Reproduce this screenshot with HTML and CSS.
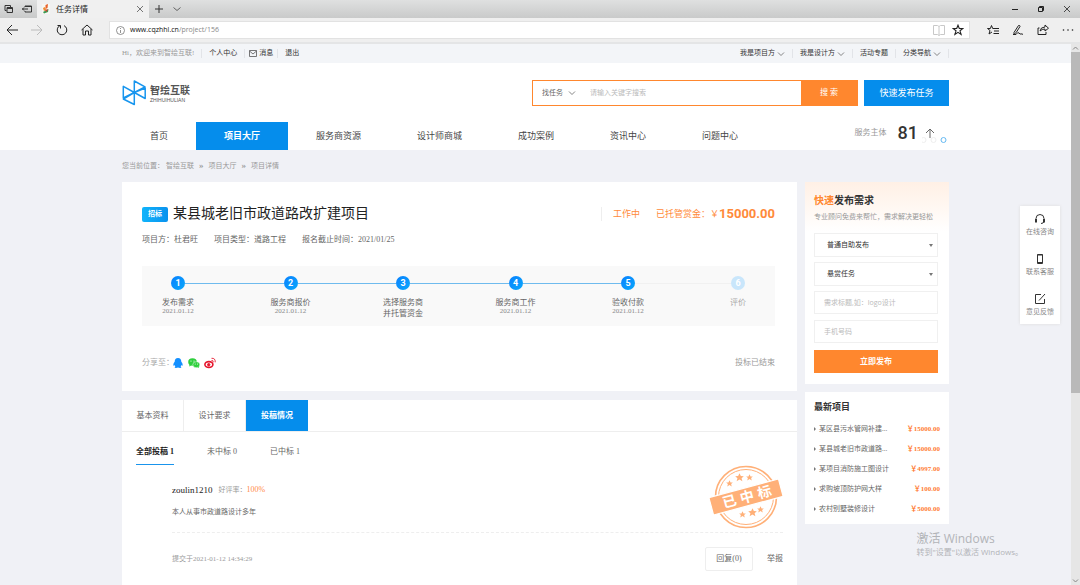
FILE: index.html
```html
<!DOCTYPE html>
<html lang="zh-CN">
<head>
<meta charset="utf-8">
<meta name="viewport" content="width=device-width, initial-scale=1">
<title>任务详情</title>
<link rel="stylesheet" href="styles.css">
</head>
<body>
<svg class="defs" width="0" height="0" aria-hidden="true">
  <symbol id="chev" viewBox="0 0 8 8"><path d="M1 2.5 4 5.5 7 2.5" fill="none" stroke="#777" stroke-width=".9"/></symbol>
  <symbol id="star" viewBox="-5 -5 10 10"><path d="M0-4.800 1.500-1.600 4.800-1.500 2.300.7 3.200 4.300 0 2.300-3.200 4.300-2.300.7-4.800-1.500-1.500-1.600Z" fill="currentColor"/></symbol>
</svg>

<div class="tabstrip">
  <div class="strip-tools">
    <svg width="10" height="10" viewBox="0 0 10 10" fill="none" stroke="#333"><path d="M2.5 6.5H1v-5h5.500v1.500M3 3.500h5.500v5H3zM3 4.500h5.500"/></svg>
    <svg width="10" height="10" viewBox="0 0 10 10" fill="none" stroke="#333"><path d="M3 3V2h6.500v6H3V7M0 5h6M2 3.500.500 5 2 6.500M3 2.500h6"/></svg>
  </div>
  <div class="browser-tab">
    <svg width="8" height="10" viewBox="0 0 8 10"><rect width="8" height="10" fill="#f7f7f2"/><path d="M3.500 1 6 0 5.500 4 3.500 5Z" fill="#e9632c"/><path d="M1 4 3 3 4 6 2 7Z" fill="#f08a30"/><path d="M1 8 6.500 5 6 8 2 9.500Z" fill="#3c9a55"/><path d="M3 6 6 5 4.500 8Z" fill="#d33b2e"/></svg>
    <span class="browser-tab-title">任务详情</span>
    <svg width="8" height="8" viewBox="0 0 8 8" stroke="#555" stroke-width=".8"><path d="m1 1 6 6M7 1 1 7"/></svg>
  </div>
  <div class="strip-new">
    <svg width="8" height="8" viewBox="0 0 8 8" stroke="#333"><path d="M0 4h8M4 0v8"/></svg>
    <svg width="8" height="8" viewBox="0 0 8 8" fill="none" stroke="#444" stroke-width=".8"><path d="m.5 2.500 3.500 3 3.500-3"/></svg>
  </div>
  <div class="window-tools">
    <svg width="6" height="6" viewBox="0 0 6 6" stroke="#222"><path d="M0 3.500h6"/></svg>
    <svg width="6" height="6" viewBox="0 0 6 6" fill="none" stroke="#222"><path d="M.5 1.500h4v4h-4zM1.500 1.500v-1h4v4h-1"/></svg>
    <svg width="6" height="6" viewBox="0 0 6 6" stroke="#222" stroke-width=".8"><path d="m0 0 6 6M6 0 0 6"/></svg>
  </div>
</div>
<div class="toolbar">
  <div class="toolbar-nav">
    <svg width="12" height="12" viewBox="0 0 12 12" fill="none" stroke="#222"><path d="M12 6H1M6 1 1 6l5 5"/></svg>
    <svg width="12" height="12" viewBox="0 0 12 12" fill="none" stroke="#bbb"><path d="M0 6h11M6 1l5 5-5 5"/></svg>
    <svg width="12" height="12" viewBox="0 0 12 12" fill="none" stroke="#222"><path d="M8 1.600A4.800 4.800 0 1 1 4 1.600M1.500 1.500H4.500V4.500"/></svg>
    <svg width="12" height="12" viewBox="0 0 12 12" fill="none" stroke="#222"><path d="M.5 6 6 1l5.500 5M2 5v6h2.500V7h3v4H10V5"/></svg>
  </div>
  <div class="address">
    <svg width="9" height="9" viewBox="0 0 9 9" fill="none" stroke="#777" stroke-width=".8"><circle cx="4.500" cy="4.500" r="4"/><path d="M4.500 4v3M4.500 2v1"/></svg>
    <span class="address-url"><b>www.cqzhhl.cn</b>/project/156</span>
    <svg width="12" height="11" viewBox="0 0 12 11" fill="none" stroke="#c8c8c8"><path d="M.5.500h4l1.500 1 1.500-1h4v9h-4l-1.500 1-1.500-1h-4zM6 1.500v9"/></svg>
    <svg width="12" height="12" viewBox="0 0 12 12" fill="none" stroke="#222" stroke-width="1.100"><path d="m6 1.200 1.300 3.300h3.600L8 6.800l1.100 3.700L6 8.300l-3.100 2.200L4 6.800 1.100 4.500h3.600z"/></svg>
  </div>
  <div class="toolbar-actions">
    <svg width="12" height="12" viewBox="0 0 12 12" fill="none" stroke="#222"><path d="M7 4.500H5.700L4.500 1.500 3.400 4.500H.5L3 6.500 2 10l3-2M7 4.500h5M7 7h5M6.500 9.500H12"/></svg>
    <svg width="12" height="12" viewBox="0 0 12 12" fill="none" stroke="#222"><path d="M2 8.500 6.500 1.500q1.500-.5 1.500 1L4.500 8 2 10.500ZM1 10.500h3q2-3 3-1.500t2 1 2 .5"/></svg>
    <svg width="12" height="12" viewBox="0 0 12 12" fill="none" stroke="#222"><path d="M2.500 4H1v6.500h8V8M3 7q.5-4 5-4V1l3.500 3.200L8 7V5Q5 5 3 7Z"/></svg>
    <svg width="12" height="12" viewBox="0 0 12 12" fill="#222"><circle cx="1.500" cy="6" r=".8"/><circle cx="6" cy="6" r=".8"/><circle cx="10.500" cy="6" r=".8"/></svg>
  </div>
</div>

<div class="viewport">
<div class="page">
  <div class="topbar">
    <div class="container topbar-row">
      <ul class="toplinks toplinks-left">
        <li class="muted">Hi，欢迎来到智绘互联!</li>
        <li><a href="#">个人中心</a></li>
        <li class="tight"><a href="#"><svg width="8" height="7" viewBox="0 0 8 7" fill="none" stroke="#555" stroke-width=".8"><path d="M.5.500h7v6h-7zM.5 1 4 4l3.500-3"/></svg>消息</a></li>
        <li><a href="#">退出</a></li>
      </ul>
      <ul class="toplinks toplinks-right">
        <li><a href="#">我是项目方<svg width="8" height="8"><use href="#chev"/></svg></a></li>
        <li><a href="#">我是设计方<svg width="8" height="8"><use href="#chev"/></svg></a></li>
        <li><a href="#">活动专题</a></li>
        <li><a href="#">分类导航<svg width="8" height="8"><use href="#chev"/></svg></a></li>
      </ul>
    </div>
  </div>

  <header class="header">
    <div class="container">
      <div class="brand-row">
        <a class="logo" href="#">
          <svg width="24" height="26" viewBox="0 0 24 26" fill="none" stroke="#1795ee" stroke-width="1.500" stroke-linejoin="round"><path d="M12.300 12.500V1L23 6.800ZM12.300 12.500 1.300 6.300V18ZM12.300 12.500 23.200 8V18.500ZM12.300 12.500V24.500L1.300 19Z"/></svg>
          <span class="logo-words"><b>智绘互联</b><small>ZHIHUIHULIAN</small></span>
        </a>
        <form class="search">
          <span class="search-kind"><select aria-label="搜索类型"><option>找任务</option></select><svg width="8" height="8"><use href="#chev"/></svg></span>
          <input type="text" aria-label="关键字" placeholder="请输入关键字搜索">
          <button type="button">搜 索</button>
        </form>
        <button class="publish" type="button">快速发布任务</button>
      </div>
      <div class="nav-row">
        <nav class="nav">
          <a href="#">首页</a><a class="active" href="#">项目大厅</a><a href="#">服务商资源</a><a href="#">设计师商城</a><a href="#">成功案例</a><a href="#">资讯中心</a><a href="#">问题中心</a>
        </nav>
        <div class="counter">
          <span>服务主体</span><strong>81</strong>
          <svg width="27" height="22" viewBox="0 0 27 22" fill="none"><path d="M8 16V7M4 11l4-4 4 4" stroke="#666"/><circle cx="1.500" cy="18" r="2.500" stroke="#eee"/><circle cx="11.500" cy="18" r="2.500" stroke="#eee"/><circle cx="21.500" cy="18" r="2.500" stroke="#65b9f2"/></svg>
        </div>
      </div>
    </div>
  </header>

  <div class="container">
    <div class="crumbs"><span>您当前位置：</span><a href="#">智绘互联</a><i>»</i><a href="#">项目大厅</a><i>»</i><a href="#">项目详情</a></div>
    <div class="columns">
      <main class="main">
        <section class="card project">
          <div class="title-row">
            <span class="badge">招标</span>
            <h1>某县城老旧市政道路改扩建项目</h1>
            <div class="bounty"><span>工作中</span><span class="bounty-sum">已托管赏金：￥<strong>15000.00</strong></span></div>
          </div>
          <div class="meta"><span>项目方：杜君旺</span><span>项目类型：道路工程</span><span>报名截止时间：2021/01/25</span></div>
          <ol class="steps">
            <li><b>1</b><p>发布需求</p><time>2021.01.12</time></li>
            <li><b>2</b><p>服务商报价</p><time>2021.01.12</time></li>
            <li><b>3</b><p>选择服务商<br>并托管资金</p></li>
            <li><b>4</b><p>服务商工作</p><time>2021.01.12</time></li>
            <li class="last-done"><b>5</b><p>验收付款</p><time>2021.01.12</time></li>
            <li class="pending"><b>6</b><p>评价</p></li>
          </ol>
          <div class="share">
            <span>分享至：</span>
            <a href="#" aria-label="QQ"><svg width="12" height="12" viewBox="0 0 12 12" fill="#1490ff"><path d="M6 1C3.700 1 2.700 2.700 2.700 4.700 1.600 6 1 7.600 1.500 8.800c.4.200.8-.4 1-.7.200.7.500 1.100.9 1.500-1.200.6-.9 1.400.5 1.400.9 0 1.700-.2 2.100-.5.400.3 1.200.5 2.100.5 1.400 0 1.700-.8.500-1.400.4-.4.700-.8.900-1.500.2.300.6.900 1 .7.500-1.200-.1-2.800-1.200-4.100C9.300 2.700 8.300 1 6 1Z"/></svg></a>
            <a href="#" aria-label="微信"><svg width="12" height="12" viewBox="0 0 12 12"><ellipse cx="4.500" cy="5" rx="4.300" ry="3.700" fill="#2fcf3d"/><path d="m1.500 7.500-.3 2 2-1z" fill="#2fcf3d"/><ellipse cx="8.300" cy="7.700" rx="3.500" ry="3" fill="#2fcf3d" stroke="#fff" stroke-width=".5"/><path d="m9.500 10 1.300 1v-2z" fill="#2fcf3d"/><g fill="#fff"><circle cx="3" cy="4" r=".6"/><circle cx="6" cy="4" r=".6"/><circle cx="7.200" cy="7" r=".5"/><circle cx="9.500" cy="7" r=".5"/></g></svg></a>
            <a href="#" aria-label="微博"><svg width="12" height="12" viewBox="0 0 12 12" fill="none" stroke="#e6162d"><ellipse cx="4.900" cy="7.500" rx="4" ry="2.900" stroke-width="1.600"/><circle cx="4.700" cy="7.700" r="1.200" fill="#e6162d"/><path d="M7.500 3.500q2-.4 1.700 1.800M7.500 1.300q4-.4 3.700 4" stroke-width=".9"/></svg></a>
            <span class="share-state">投标已结束</span>
          </div>
        </section>

        <section class="card bids">
          <div class="tabs"><button type="button">基本资料</button><button type="button">设计要求</button><button class="active" type="button">投稿情况</button></div>
          <div class="subtabs"><a class="active" href="#">全部投稿 1</a><a href="#">未中标 0</a><a href="#">已中标 1</a></div>
          <article class="bid">
            <div class="bid-body">
              <div class="bid-user"><b>zoulin1210</b><span>好评率：</span><em>100%</em></div>
              <p>本人从事市政道路设计多年</p>
              <svg class="stamp" width="74" height="66" viewBox="0 0 74 66" role="img" aria-label="已中标">
                <g fill="none" stroke="#ffb078"><circle cx="37" cy="33" r="30.500" stroke-width="1.600"/><circle cx="37" cy="33" r="27.500"/></g>
                <g color="#ffb078"><use href="#star" x="17" y="16" width="7" height="7"/><use href="#star" x="26" y="9" width="9" height="9"/><use href="#star" x="37" y="10" width="7" height="7"/><use href="#star" x="30" y="47" width="7" height="7"/><use href="#star" x="39" y="44" width="9" height="9"/><use href="#star" x="48" y="42" width="7" height="7"/></g>
                <g transform="rotate(-15 37 33)"><rect x="1" y="24" width="72" height="18" rx="1" fill="#ffb078" stroke="#fff" stroke-width="1.200"/><text y="38" fill="#fff"><tspan x="13">已</tspan><tspan x="31">中</tspan><tspan x="49">标</tspan></text></g>
              </svg>
            </div>
            <div class="bid-foot"><span>提交于2021-01-12 14:34:29</span><button class="reply" type="button">回复(0)</button><a href="#">举报</a></div>
          </article>
        </section>
      </main>

      <aside class="side">
        <form class="card quick">
          <h2><em>快速</em>发布需求</h2>
          <p>专业顾问免费来帮忙，需求解决更轻松</p>
          <span class="pick"><select aria-label="发布方式"><option>普通自助发布</option></select></span>
          <span class="pick"><select aria-label="任务类型"><option>悬赏任务</option></select></span>
          <input type="text" aria-label="需求标题" placeholder="需求标题,如：logo设计">
          <input type="tel" aria-label="手机号码" placeholder="手机号码">
          <button type="button">立即发布</button>
        </form>
        <section class="card latest">
          <h2>最新项目</h2>
          <ul>
            <li><a href="#">某区县污水管网补建...</a><b>￥15000.00</b></li>
            <li><a href="#">某县城老旧市政道路...</a><b>￥15000.00</b></li>
            <li><a href="#">某项目消防施工图设计</a><b>￥4997.00</b></li>
            <li><a href="#">求购坡顶防护网大样</a><b>￥100.00</b></li>
            <li><a href="#">农村别墅装修设计</a><b>￥5000.00</b></li>
          </ul>
        </section>
      </aside>
    </div>
  </div>

  <div class="dock">
    <a href="#"><svg width="12" height="12" viewBox="0 0 12 12" fill="none" stroke="#333"><path d="M2 8V5.500a4 4 0 0 1 8 0V8M10 8.500Q9.500 10.500 7 10.500"/><path d="M2 6v3.500M10 6v3.500" stroke-width="2"/></svg>在线咨询</a>
    <a href="#"><svg width="12" height="12" viewBox="0 0 12 12" fill="none" stroke="#333"><path d="M3.500 1.500h5v9h-5zM3.500 2h5M3.500 9.500h5"/></svg>联系客服</a>
    <a href="#"><svg width="12" height="12" viewBox="0 0 12 12" fill="none" stroke="#333"><path d="M7 1.500H1.500v9h9V6M5 7.500l6-6.500"/></svg>意见反馈</a>
  </div>
  <div class="watermark"><p>激活 Windows</p><span>转到"设置"以激活 Windows。</span></div>
</div>
<div class="scrollbar">
  <svg width="9" height="8" viewBox="0 0 9 8" fill="none" stroke="#888"><path d="m2 5.500 2.500-2.500L7 5.500"/></svg>
  <div class="scroll-thumb"></div>
  <svg width="9" height="9" viewBox="0 0 9 9" fill="none" stroke="#888"><path d="m2 3.500 2.500 2.500L7 3.500"/></svg>
</div>
</div>
</body>
</html>
```

FILE: styles.css
```css
* { box-sizing: border-box; }
body, h1, h2, p, ul, ol { margin: 0; padding: 0; }
ul, ol { list-style: none; }
a { color: inherit; text-decoration: none; }
em, i { font-style: normal; }
svg { flex: none; }
button, input, select { font: inherit; color: inherit; border: 0; border-radius: 0; background: none; padding: 0; margin: 0; outline: 0; }
select { appearance: none; }

body {
  height: 100vh;
  display: flex;
  flex-direction: column;
  overflow: hidden;
  font: 8px/12px "Liberation Serif", "Noto Sans CJK SC", serif;
  color: #666;
  background: #f0f1f6;
}
.defs { position: absolute; }

/* Browser frame */
.tabstrip {
  flex: none;
  height: 18px;
  display: flex;
  align-items: center;
  background: linear-gradient(#dfe0e0, #c9caca);
}
.strip-tools { width: 37px; display: flex; gap: 8px; padding-left: 4px; }
.browser-tab {
  width: 112px;
  height: 18px;
  display: flex;
  align-items: center;
  gap: 6px;
  padding: 0 5px;
  background: #f0f0f0;
  color: #222;
}
.browser-tab-title { flex: 1; font: 8px/12px "Noto Sans CJK SC", sans-serif; }
.strip-new { display: flex; gap: 10px; padding-left: 6px; }
.window-tools { margin-left: auto; display: flex; gap: 20px; padding-right: 10px; }
.toolbar {
  flex: none;
  height: 26px;
  display: flex;
  align-items: center;
  background: #efefef;
  border-bottom: 2px solid #e4e5e6;
}
.toolbar-nav { width: 109px; display: flex; gap: 13px; padding-left: 6px; }
.address {
  flex: 1;
  height: 18px;
  display: flex;
  align-items: center;
  gap: 7px;
  padding: 0 5px 0 6px;
  background: #fff;
  border: 1px solid #e2e2e2;
}
.address-url { flex: 1; margin-left: -2px; font: 7px/12px "Open Sans", sans-serif; color: #888; }
.address-url b { font-weight: 500; color: #111; }
.toolbar-actions { display: flex; gap: 13px; padding: 0 6px 0 17px; }

/* Page frame */
.viewport { flex: 1; min-height: 0; display: flex; }
.page { flex: 1; min-width: 0; position: relative; overflow: hidden; }
.scrollbar { width: 9px; display: flex; flex-direction: column; background: #e6e6e6; }
.scroll-thumb { height: 63%; margin-bottom: auto; background: #b9b9b9; }
.container { max-width: 827px; margin: 0 auto; }
.card { background: #fff; }

/* Top links */
.topbar { background: #f3f5f8; font-size: 7px; color: #333; }
.topbar-row { display: flex; justify-content: space-between; height: 19px; align-items: center; }
.toplinks { display: flex; }
.toplinks li { line-height: 9px; padding: 0 7px; }
.toplinks a { display: flex; align-items: center; gap: 2px; }
.toplinks-left li + li { border-left: 1px solid #e2e4e8; }
.toplinks-left li:first-child { padding-left: 0; }
.toplinks-left .tight { padding: 0 4px; }
.toplinks-right li { border-right: 1px solid #e2e4e8; }
.toplinks .muted { color: #999; }

/* Header */
.header { background: #fff; padding-top: 17px; }
.brand-row { display: flex; height: 26px; }
.logo { display: flex; align-items: center; gap: 4px; margin-right: auto; }
.logo-words { display: flex; flex-direction: column; color: #555; font-family: "Noto Sans CJK SC", sans-serif; }
.logo-words b { font-size: 10px; line-height: 14px; }
.logo-words small { font: 5px/6px "Liberation Sans", sans-serif; }
.search { width: 326px; display: flex; border: 1px solid #ff872e; margin-right: 6px; }
.search-kind { width: 53px; display: flex; align-items: center; gap: 4px; padding-left: 9px; font-size: 7px; }
.search-kind select { width: 22px; }
.search input { flex: 1; min-width: 0; padding-left: 4px; font-size: 7px; }
.search button { width: 56px; background: #ff872e; color: #fff; font-size: 8px; }
input::placeholder { color: #bbb; opacity: 1; }
.publish { width: 85px; background: #058dec; color: #fff; font-size: 9px; }
.nav-row { display: flex; justify-content: space-between; margin-top: 16px; }
.nav { display: flex; font-size: 9px; line-height: 28px; color: #444; }
.nav a { padding: 0 28px; }
.nav .active { background: #058dec; color: #fff; font-weight: bold; }
.counter { display: flex; align-items: center; color: #999; height: 22px; }
.counter strong { margin: 0 4px 0 11px; font: 500 18px/22px Roboto, sans-serif; color: #333; }

/* Breadcrumbs and columns */
.crumbs { display: flex; padding: 10px 0; font-size: 7px; line-height: 12px; color: #999; }
.crumbs span { margin-right: 2px; }
.crumbs i { padding: 0 5px; font-size: 9px; font-weight: bold; line-height: 10px; }
.columns { display: flex; gap: 8px; align-items: flex-start; }
.main { flex: 1; min-width: 0; }
.side { width: 144px; }

/* Project summary */
.project { padding: 23px 22px 22px 20px; }
.title-row { display: flex; align-items: center; gap: 5px; }
.badge {
  padding: 0 6px;
  border-radius: 2px;
  background: linear-gradient(90deg, #10b4fb, #0a92ee);
  color: #fff;
  font-size: 7px;
  font-weight: bold;
  line-height: 15px;
}
h1 { font-size: 14px; font-weight: 400; line-height: 18px; color: #222; }
.bounty { margin-left: auto; display: flex; align-items: center; gap: 16px; padding-left: 11px; border-left: 1px solid #eee; font-size: 9px; line-height: 14px; color: #ff8a3a; }
.bounty-sum { display: flex; align-items: center; }
.bounty strong { font: bold 13px/14px Roboto, sans-serif; }
.meta { display: flex; gap: 16px; padding-top: 11px; }
.steps { display: flex; margin-top: 20px; padding-top: 10px; height: 60px; background: #f9f9f9; }
.steps li { flex: 1; position: relative; }
.steps .last-done { flex: none; width: 110px; }
.steps .pending { flex: none; width: 73px; }
.steps li:not(.pending)::after { content: ""; position: absolute; left: 43px; right: -29px; top: 7px; height: 1px; background: #6fbbee; }
.steps .last-done::after { background: #f1f1f1 !important; }
.steps b {
  display: block;
  width: 14px;
  height: 14px;
  margin-left: 29px;
  border-radius: 50%;
  background: linear-gradient(135deg, #0a80ff, #08a8fb);
  color: #fff;
  font: bold 9px/14px Roboto, sans-serif;
  text-align: center;
}
.steps p { width: 72px; margin-top: 7px; line-height: 11px; text-align: center; }
.steps time { display: block; width: 72px; font-size: 7px; line-height: 7px; text-align: center; color: #888; }
.steps .pending b { background: #c9e6fb; }
.steps .pending p { color: #aaa; }
.share { display: flex; align-items: center; gap: 4px; margin-top: 31px; color: #aaa; }
.share span:first-child { margin-right: -6px; }
.share a { height: 12px; }
.share-state { margin-left: auto; color: #999; }

/* Bids */
.bids { margin-top: 9px; padding-bottom: 30px; }
.tabs { display: flex; border-bottom: 1px solid #eee; }
.tabs button { width: 62px; height: 31px; border-right: 1px solid #eee; }
.tabs .active { background: #058dec; border: 0; color: #fff; font-weight: bold; }
.subtabs { display: flex; gap: 33px; padding: 14px 14px 0; }
.subtabs a { height: 19px; }
.subtabs .active { font-weight: bold; color: #222; border-bottom: 1px solid #1994ec; }
.bid { padding: 19px 14px 0 50px; }
.bid-body { position: relative; height: 49px; border-bottom: 1px dashed #eee; }
.bid-user { display: flex; align-items: center; font-size: 7px; color: #999; }
.bid-user b { margin-right: 6px; font-size: 9px; font-weight: 400; color: #222; }
.bid-user em { font-size: 8px; color: #ff8a4a; }
.bid-body p { margin-top: 10px; font-size: 7px; }
.stamp { position: absolute; right: 0; bottom: 2px; font: bold 14px "Noto Sans CJK SC", sans-serif; }
.bid-foot { display: flex; align-items: center; padding-top: 14px; }
.bid-foot span { margin-right: auto; font-size: 7px; color: #999; }
.reply { width: 48px; height: 24px; margin-right: 14px; border: 1px solid #eee; border-radius: 2px; }

/* Quick publish */
.quick { display: flex; flex-direction: column; padding: 11px 11px 11px 9px; font-size: 7px; background: linear-gradient(#fff0e5, #fff 50px); }
h2 { color: #333; }
.quick h2 { font-size: 10px; line-height: 15px; }
.quick em { color: #ff872e; }
.quick p { margin: 3px -8px 10px 0; color: #999; }
.pick { position: relative; display: flex; height: 24px; margin-bottom: 5px; border: 1px solid #f0f0f0; background: #fff; color: #333; }
.pick select { flex: 1; padding-left: 12px; }
.pick::after { content: ""; position: absolute; right: 4px; top: 10px; border: 2px solid transparent; border-top: 3px solid #777; border-bottom: 0; }
.quick input { height: 23px; margin-bottom: 6px; padding-left: 9px; border: 1px solid #f0f0f0; font-family: "Open Sans", "Noto Sans CJK SC", sans-serif; }
.quick button { height: 23px; margin-top: 1px; background: #ff872e; color: #fff; font-size: 8px; font-weight: bold; }

/* Latest projects */
.latest { margin-top: 8px; padding: 9px 9px 5px; }
.latest h2 { font-size: 9px; line-height: 12px; }
.latest ul { padding-top: 6px; }
.latest li { display: flex; align-items: center; font-size: 7px; line-height: 20px; }
.latest li::before { content: ""; margin-right: 3px; border: 2px solid transparent; border-left: 2px solid #777; border-right: 0; }
.latest b { margin-left: auto; color: #ff7d35; }

/* Floating items */
.dock { position: absolute; right: 11px; top: 162px; width: 40px; padding: 7px 0 6px; display: grid; gap: 15px; background: #fff; box-shadow: 0 0 3px #ddd; font-size: 7px; color: #888; }
.dock a { display: flex; flex-direction: column; align-items: center; gap: 1px; }
.watermark { position: absolute; right: 48px; bottom: 27px; color: #b2b4b8; font-family: "Open Sans", "Noto Sans CJK SC", sans-serif; }
.watermark p { font-size: 12px; line-height: 15px; }
.watermark span { font-size: 8px; line-height: 12px; }
```
